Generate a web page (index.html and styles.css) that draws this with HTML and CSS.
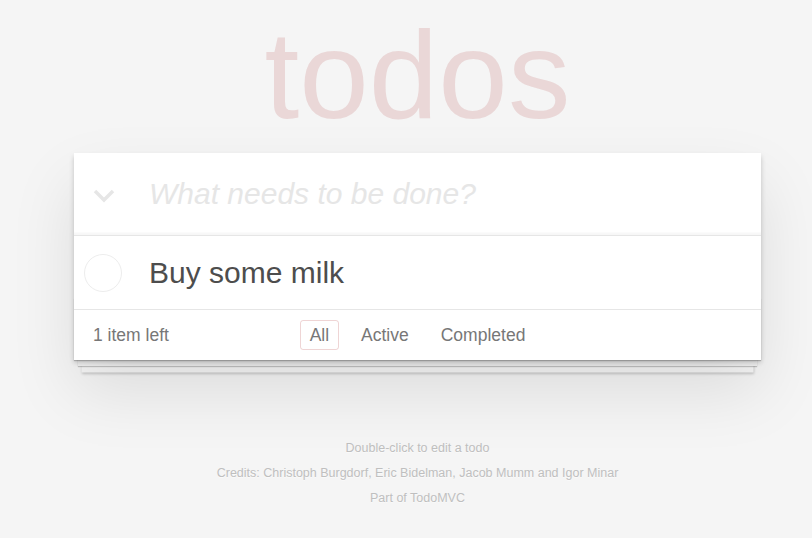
FILE: index.html
```html
<!DOCTYPE html>
<html lang="en">
<head>
    <meta charset="UTF-8">
    <meta name="viewport" content="width=device-width, initial-scale=1.0">
    <title>Todos</title>
    <link rel="stylesheet" href="styles.css">
</head>
<body>

<div class="page">
    <h1 class="title">todos</h1>

    <section class="todoapp">
        <!-- new todo input -->
        <header class="header">
            <svg class="toggle-all" width="22" height="14" viewBox="0 0 22 14">
                <polyline points="2,2 11,11 20,2" fill="none" stroke="#e6e6e6" stroke-width="3.5"/>
            </svg>
            <input class="new-todo" placeholder="What needs to be done?" autofocus>
        </header>

        <!-- list -->
        <section class="main">
            <ul class="todo-list">
                <li class="todo-item">
                    <span class="toggle"></span>
                    <label>Buy some milk</label>
                </li>
            </ul>
        </section>

        <footer class="footer">
            <span class="todo-count"><strong>1</strong> item left</span>
            <ul class="filters">
                <li><a href="#/" class="selected">All</a></li>
                <li><a href="#/active">Active</a></li>
                <li><a href="#/completed">Completed</a></li>
            </ul>
            <span></span>
        </footer>
    </section>

    <footer class="info">
        <p>Double-click to edit a todo</p>
        <p>Credits: <a href="#">Christoph Burgdorf</a>, <a href="#">Eric Bidelman</a>, <a href="#">Jacob Mumm</a> and <a href="#">Igor Minar</a></p>
        <p>Part of <a href="#">TodoMVC</a></p>
    </footer>
</div>

</body>
</html>
```

FILE: styles.css
```css
html,
body {
    margin: 0;
    padding: 0;
}

body {
    font: 17.5px "Liberation Sans", Arial, sans-serif;
    background: #f5f5f5;
    color: #4d4d4d;
}

.page {
    width: 687px;
    margin: 0 0 0 74px;
}

.title {
    margin: 12px 0 0;
    height: 125px;
    font-size: 125px;
    line-height: 125px;
    font-weight: normal;
    text-align: center;
    color: rgba(175, 47, 47, 0.15);
}

.todoapp {
    background: #fff;
    margin: 16px 0 0;
    position: relative;
    box-shadow: 0 2.5px 5px 0 rgba(0, 0, 0, 0.2),
                0 31px 62px 0 rgba(0, 0, 0, 0.1);
}

.header {
    display: flex;
    align-items: center;
    height: 82px;
    box-shadow: inset 0 -2.5px 1px rgba(0, 0, 0, 0.03);
}

.toggle-all {
    flex: none;
    margin: 4px 34px 0 19px;
}

.new-todo {
    flex: 1;
    min-width: 0;
    padding: 20px 20px 20px 0;
    border: none;
    outline: none;
    background: transparent;
    font: 30px "Liberation Sans", Arial, sans-serif;
    line-height: 42px;
    color: #4d4d4d;
}

.new-todo::placeholder {
    font-style: italic;
    color: #e6e6e6;
}

.main {
    border-top: 1px solid #e6e6e6;
}

.todo-list {
    margin: 0;
    padding: 0;
    list-style: none;
}

.todo-item {
    display: flex;
    align-items: center;
    font-size: 30px;
    border-bottom: 1px solid #ededed;
}

.todo-item:last-child {
    border-bottom: none;
}

.toggle {
    flex: none;
    width: 36px;
    height: 36px;
    margin-left: 10px;
    border: 1px solid #ededed;
    border-radius: 50%;
}

.todo-item label {
    padding: 18.5px 18px 18.5px 27px;
    line-height: 36px;
}

.footer {
    display: grid;
    grid-template-columns: 1fr auto 1fr;
    align-items: center;
    height: 50px;
    padding: 0 19px;
    color: #777;
    border-top: 1px solid #e6e6e6;
    position: relative;
}

/* stacked paper look under the card */
.footer:before {
    content: '';
    position: absolute;
    right: 0;
    bottom: 0;
    left: 0;
    height: 62px;
    overflow: hidden;
    box-shadow: 0 1px 1px rgba(0, 0, 0, 0.2),
                0 10px 0 -4px #f6f6f6,
                0 11px 1px -4px rgba(0, 0, 0, 0.2),
                0 20px 0 -7.5px #f6f6f6,
                0 21px 2.5px -7.5px rgba(0, 0, 0, 0.2);
    z-index: -1;
}

.todo-count strong {
    font-weight: normal;
}

.filters {
    display: flex;
    margin: 0;
    padding: 0;
    list-style: none;
}

.filters a {
    display: block;
    margin: 0 6px;
    padding: 4px 9px;
    line-height: 20px;
    color: inherit;
    text-decoration: none;
    border: 1px solid transparent;
    border-radius: 3px;
}

.filters a.selected {
    border-color: rgba(175, 47, 47, 0.2);
}

.info {
    margin: 82px 0 0;
    color: #bfbfbf;
    font-size: 12.5px;
    text-align: center;
    text-shadow: 0 1px 0 rgba(255, 255, 255, 0.5);
}

.info p {
    margin: 0 0 12.5px;
    line-height: 12.5px;
}

.info a {
    color: inherit;
    text-decoration: none;
}
```
